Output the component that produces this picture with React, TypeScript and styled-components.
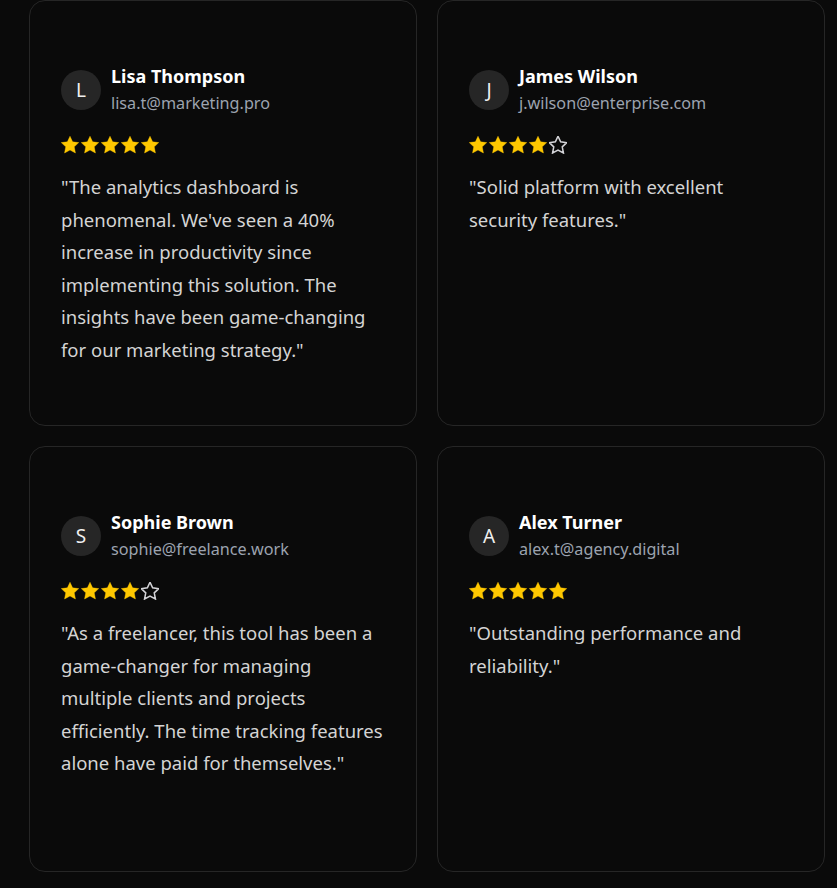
import React from 'react'
import styled, { createGlobalStyle } from 'styled-components'

type Review = {
  name: string
  email: string
  rating: number
  // quote kept as its display lines so wrapping matches the design
  quote: string[]
}

const reviews: Review[] = [
  {
    name: 'Lisa Thompson',
    email: 'lisa.t@marketing.pro',
    rating: 5,
    quote: [
      '"The analytics dashboard is',
      "phenomenal. We've seen a 40%",
      'increase in productivity since',
      'implementing this solution. The',
      'insights have been game-changing',
      'for our marketing strategy."',
    ],
  },
  {
    name: 'James Wilson',
    email: 'j.wilson@enterprise.com',
    rating: 4,
    quote: ['"Solid platform with excellent', 'security features."'],
  },
  {
    name: 'Sophie Brown',
    email: 'sophie@freelance.work',
    rating: 4,
    quote: [
      '"As a freelancer, this tool has been a',
      'game-changer for managing',
      'multiple clients and projects',
      'efficiently. The time tracking features',
      'alone have paid for themselves."',
    ],
  },
  {
    name: 'Alex Turner',
    email: 'alex.t@agency.digital',
    rating: 5,
    quote: ['"Outstanding performance and', 'reliability."'],
  },
]

const STAR = 'M12 1.6l3.1 6.6 7.2.9-5.3 5 1.4 7.2L12 17.8l-6.4 3.5L7 14.1l-5.3-5 7.2-.9z'

function Star({ filled }: { filled: boolean }) {
  return (
    <svg width="18" height="18" viewBox="1.4 1.3 21.2 21.2">
      <path
        d={STAR}
        fill={filled ? '#ffc800' : 'none'}
        stroke={filled ? '#ffc800' : '#d4d4d8'}
        strokeWidth={filled ? 0.5 : 1.8}
      />
    </svg>
  )
}

export default function App() {
  return (
    <>
      <GlobalStyle />
      <Page>
        <Grid>
          {reviews.map((r) => (
            <Card key={r.email}>
              <Header>
                <Avatar>{r.name[0]}</Avatar>
                <div>
                  <Name>{r.name}</Name>
                  <Email>{r.email}</Email>
                </div>
              </Header>
              <Stars>
                {[0, 1, 2, 3, 4].map((i) => (
                  <Star key={i} filled={i < r.rating} />
                ))}
              </Stars>
              <Quote>
                {r.quote.map((line) => (
                  <Line key={line}>{line}</Line>
                ))}
              </Quote>
            </Card>
          ))}
        </Grid>
      </Page>
    </>
  )
}

// Styles
const GlobalStyle = createGlobalStyle`
  html, body {
    margin: 0;
    background: #0a0a0a;
  }
  body {
    font-family: "Noto Sans", "Open Sans", sans-serif;
  }
`

const Page = styled.div`
  min-height: 888px;
  padding: 0 12px 0 29px;
  box-sizing: border-box;
`

const Grid = styled.div`
  display: grid;
  grid-template-columns: repeat(2, 388px);
  gap: 20px;
`

const Card = styled.div`
  height: 426px;
  box-sizing: border-box;
  border: 1px solid #262626;
  border-radius: 16px;
  background: #0a0a0a;
  padding: 62px 28px 30px 31px;
`

const Header = styled.div`
  display: flex;
  align-items: center;
  gap: 10px;
`

const Avatar = styled.div`
  width: 40px;
  height: 40px;
  border-radius: 50%;
  background: #262626;
  color: #f0f0f0;
  display: flex;
  align-items: center;
  justify-content: center;
  font-size: 19px;
`

const Name = styled.div`
  color: #ffffff;
  font-size: 18px;
  font-weight: 700;
  line-height: 26px;
`

const Email = styled.div`
  color: #9ca3af;
  font-size: 16.2px;
  line-height: 25px;
  padding-top: 2px;
`

const Stars = styled.div`
  display: flex;
  gap: 2px;
  margin-top: 20px;
  height: 18px;
`

const Quote = styled.p`
  margin: 17px 0 0;
  color: #d4d4d4;
  font-size: 18.5px;
  line-height: 32.5px;
`

const Line = styled.span`
  display: block;
  white-space: nowrap;
`
